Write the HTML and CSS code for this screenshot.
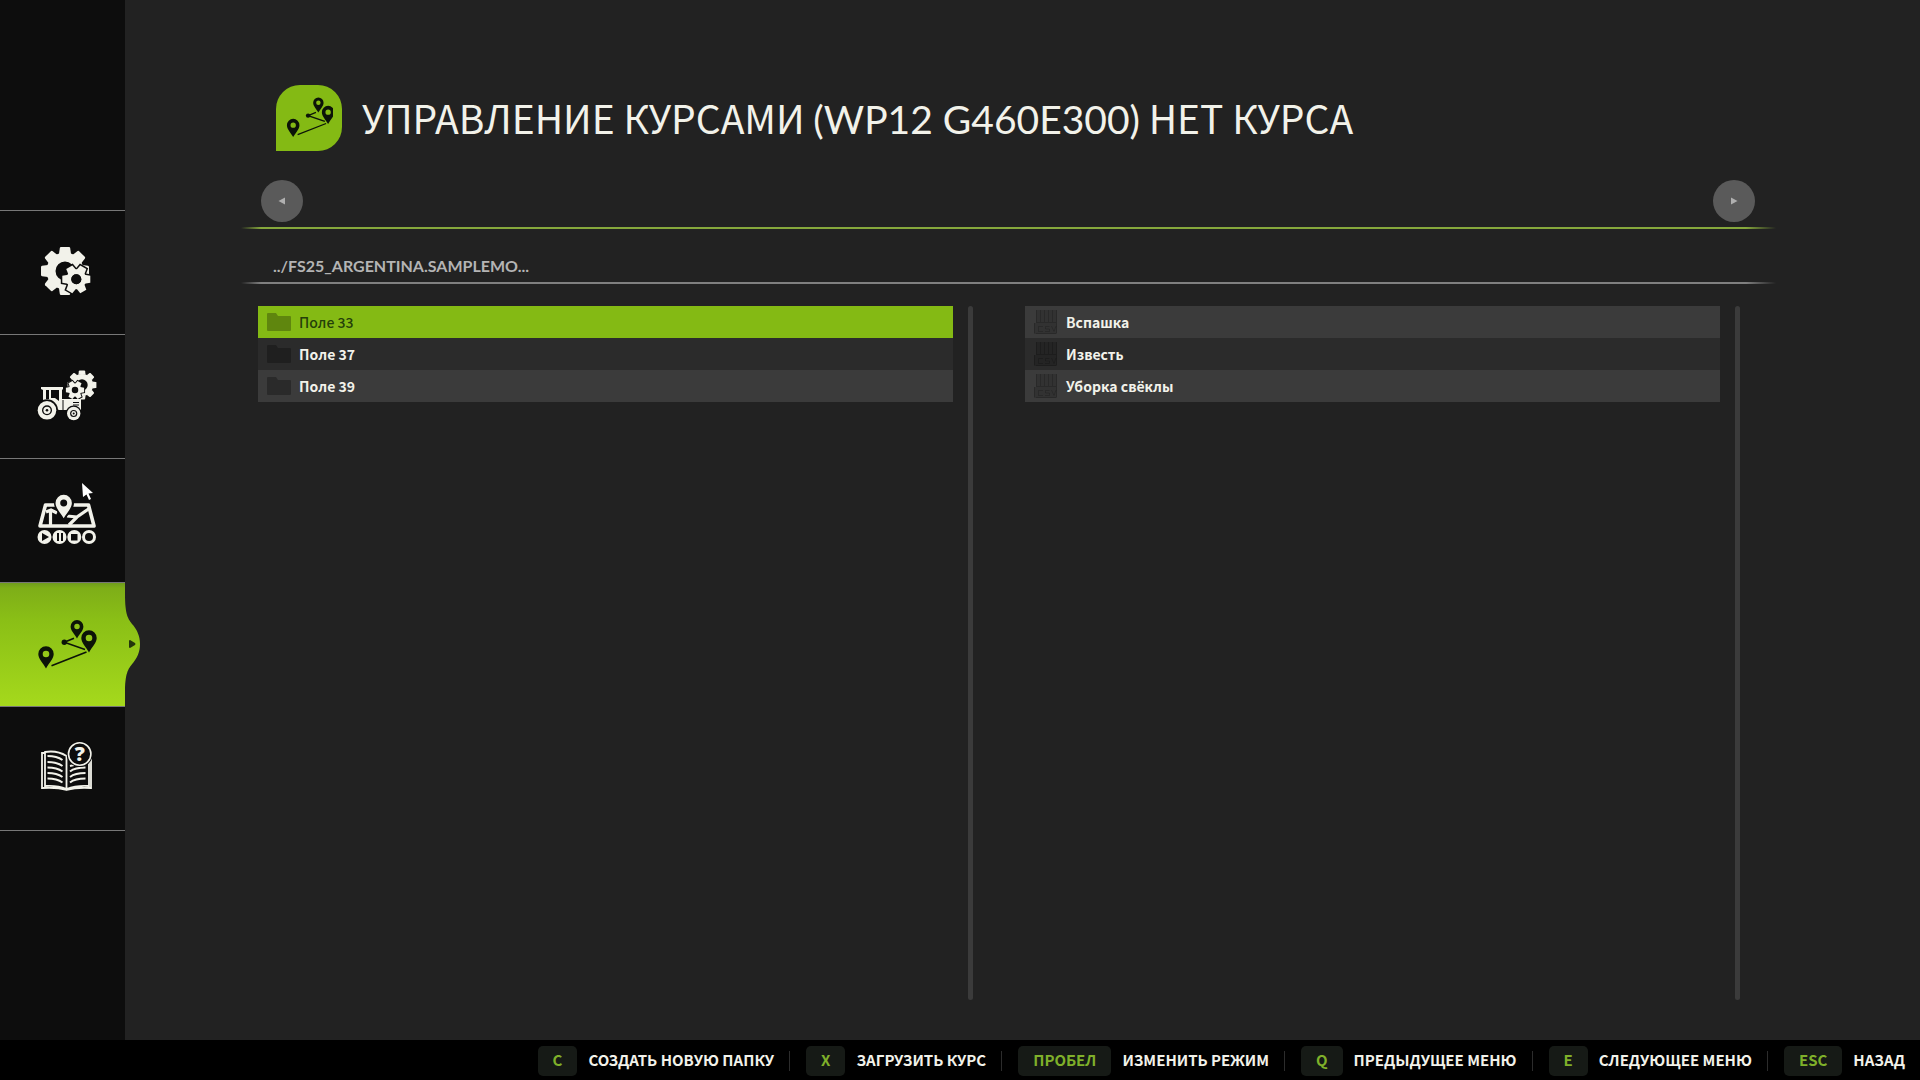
FILE: index.html
```html
<!DOCTYPE html>
<html lang="ru">
<head>
<meta charset="utf-8">
<meta name="viewport" content="width=device-width, initial-scale=1">
<title>Управление курсами</title>
<link rel="stylesheet" href="styles.css">
</head>
<body>
<svg class="defs" aria-hidden="true">
  <defs>
    <path id="tooth" d="M-6 -17 L-5.200 -23 Q-5 -24 -4 -24 H4 Q5 -24 5.200 -23 L6 -17Z"/>
    <g id="gear8">
      <circle r="14" fill="none" stroke="currentColor" stroke-width="9"/>
      <use href="#tooth"/><use href="#tooth" transform="rotate(45)"/><use href="#tooth" transform="rotate(90)"/><use href="#tooth" transform="rotate(135)"/><use href="#tooth" transform="rotate(180)"/><use href="#tooth" transform="rotate(225)"/><use href="#tooth" transform="rotate(270)"/><use href="#tooth" transform="rotate(315)"/>
    </g>
    <path id="cog" d="M-4.500 -8 L-3.500 -14 H3.500 L4.500 -8Z"/>
    <g id="gear6">
      <circle r="7.500" fill="none" stroke="currentColor" stroke-width="5"/>
      <g transform="rotate(30)"><use href="#cog"/><use href="#cog" transform="rotate(60)"/><use href="#cog" transform="rotate(120)"/><use href="#cog" transform="rotate(180)"/><use href="#cog" transform="rotate(240)"/><use href="#cog" transform="rotate(300)"/></g>
    </g>
    <path id="pin" fill-rule="evenodd" d="M0 14.500 C-3 9 -7.700 5 -7.700 0 A7.700 7.700 0 0 1 7.700 0 C7.700 5 3 9 0 14.500Z M0 -3.300 A3.300 3.300 0 1 0 0 3.300 A3.300 3.300 0 1 0 0 -3.300Z"/>
    <symbol id="route" viewBox="0 0 64 64" overflow="visible">
      <use href="#pin" x="15" y="42"/>
      <use href="#pin" transform="translate(46 14.500) scale(.83)"/>
      <use href="#pin" x="58" y="26"/>
      <circle cx="33.300" cy="30.300" r="2.700"/>
      <path d="M43 26.300 L33.300 30.300 L54 37.500 M55.500 40 L20.500 53.700" fill="none" stroke="currentColor" stroke-width="1.600"/>
    </symbol>
    <symbol id="folder" viewBox="0 0 24 18"><path d="M0 1 Q0 0 1 0 H9 L11 3 H23 Q24 3 24 4 V17 Q24 18 23 18 H1 Q0 18 0 17Z"/></symbol>
    <symbol id="file" viewBox="0 0 24 24">
      <path d="M2 0 H23 V23 H22 V24 H2 V23 H0 V13 H2Z" opacity=".5"/>
      <path d="M2.500 0V12 M6.500 0V12 M10.500 0V12 M14.500 0V12 M18.500 0V12 M22.500 0V12 M2 12.500H23 M0.500 13V23.500H22.500V13 M9 16.500H4.500V21.500H9 M15.500 16.500H11.500V19H15.500V21.500H11 M17.500 16L20 21.500L22 16" fill="none" stroke="currentColor" opacity=".6"/>
    </symbol>
  </defs>
</svg>
<div class="screen">
  <div class="workspace">
    <nav class="sidebar" aria-label="Разделы">
      <button class="tab" type="button" aria-label="Настройки">
        <svg class="tab-icon" viewBox="0 0 64 64">
          <use href="#gear8" x="34" y="31"/>
          <g transform="translate(45.300 39.300)">
            <circle r="11" class="cut"/>
            <use href="#gear6" class="cut-outline"/>
            <use href="#gear6"/>
            <circle r="5" class="cut"/>
          </g>
        </svg>
      </button>
      <button class="tab" type="button" aria-label="Настройки техники">
        <svg class="tab-icon" viewBox="0 0 64 64">
          <use href="#gear8" transform="translate(51 21) scale(.6)"/>
          <g transform="translate(44 26) scale(.65)">
            <circle r="11" class="cut"/>
            <use href="#gear6" class="cut-outline"/>
            <use href="#gear6"/>
          </g>
          <path fill-rule="evenodd" d="M10 23H32V25L31 26V35H50V46H28L24 44L12 37L12 26L10 25Z M15 26V35L18 35V26Z M20 26V34H24L28 37V26Z"/>
          <path d="M32 36V46 M42 38.500H48 M42 41H48" class="ink"/>
          <circle cx="16" cy="46.300" r="11" class="cut"/>
          <circle cx="16" cy="46.300" r="9.300"/>
          <circle cx="16" cy="46.300" r="5" class="cut"/>
          <circle cx="16" cy="46.300" r="3.600"/>
          <circle cx="16" cy="46.300" r="1.300" class="cut"/>
          <circle cx="42.700" cy="49.500" r="8" class="cut"/>
          <circle cx="42.700" cy="49.500" r="6.700"/>
          <circle cx="42.700" cy="49.500" r="3.600" class="cut"/>
          <circle cx="42.700" cy="49.500" r="2.400"/>
          <circle cx="42.700" cy="49.500" r="1" class="cut"/>
        </svg>
      </button>
      <button class="tab" type="button" aria-label="Карта">
        <svg class="tab-icon" viewBox="0 0 64 64">
          <path d="M14.500 17H57.500L63 38H9Z" fill="none" stroke="currentColor" stroke-width="3.600" stroke-linejoin="round"/>
          <path d="M15 24L20 22L26 25 M19.500 24V38 M59 20L46 29L38 37 M36 28L46 29" fill="none" stroke="currentColor" stroke-width="3.200"/>
          <path d="M33 32 C28 26 23 21 23 15 H43 C43 21 38 26 33 32Z" class="cut"/>
          <use href="#pin" transform="translate(32.700 15) scale(1.060)"/>
          <g>
            <circle cx="13.500" cy="49" r="7"/><circle cx="28.500" cy="49" r="7"/><circle cx="43.300" cy="49" r="7"/><circle cx="58" cy="49" r="7"/>
          </g>
          <path d="M11 45L18 49L11 53Z M26 45H28V53H26Z M30 45H32V53H30Z M40 46H46.500V52.500H40Z" class="cut"/>
          <circle cx="58" cy="49" r="4" class="cut"/>
        </svg>
      </button>
      <button class="tab tab-active" type="button" aria-label="Курсы" aria-current="page">
        <svg class="tab-icon" viewBox="0 0 64 64"><use href="#route"/></svg>
        <svg class="tab-bulge" viewBox="0 0 16 124" aria-hidden="true">
          <defs><linearGradient id="lime" gradientUnits="userSpaceOnUse" x1="0" y1="0" x2="0" y2="124"><stop offset="0" stop-color="#7eae18"/><stop offset=".3" stop-color="#8abf16"/><stop offset="1" stop-color="#a5d91c"/></linearGradient></defs>
          <path d="M0 12 C0 33 3 37 8 43 C12 48 15 54 15 62 C15 70 12 76 8 81 C3 87 0 91 0 112Z" fill="url(#lime)"/>
          <path d="M4 59 Q4 58 5 58 L10 61 Q11 62 10 63 L5 66 Q4 66 4 65Z" fill="#24350c"/>
        </svg>
      </button>
      <button class="tab tab-last" type="button" aria-label="Справка">
        <svg class="tab-icon" viewBox="0 0 64 64">
          <path d="M14 16 Q26 14 35.500 20 Q46 14 58 16 V50 Q46 49 35.500 53 Q26 49 14 50Z M14 17H11V52Q26 51 35.500 54Q46 51 60 52V17H58 M35.500 20V53" fill="none" stroke="currentColor" stroke-width="1.800"/>
          <path d="M16.500 20Q26 20 31.500 24 M16.500 26Q26 26 31.500 30 M16.500 31.500Q26 31.500 31.500 35.500 M16.500 37Q26 37 31.500 41 M16.500 42.500Q26 42.500 31.500 46.500 M54.500 31.500Q44 31.500 39 35.500 M54.500 37Q44 37 39 41 M54.500 42.500Q44 42.500 39 46.500 M39 30L43 29" fill="none" stroke="currentColor" stroke-width="2"/>
          <circle cx="48.700" cy="18" r="13" class="cut"/>
          <circle cx="48.700" cy="18" r="11.200" class="cut" stroke="currentColor" stroke-width="1.600"/>
          <text x="48.700" y="25" text-anchor="middle" class="help-mark">?</text>
        </svg>
      </button>
    </nav>
    <main class="content">
      <header class="heading">
        <span class="badge"><svg class="badge-icon" viewBox="0 0 64 64" aria-hidden="true"><use href="#route"/></svg></span>
        <h1 class="title">УПРАВЛЕНИЕ КУРСАМИ <span class="latin">(WP12 G460E300)</span> НЕТ КУРСА</h1>
      </header>
      <div class="pager">
        <button class="round" type="button" aria-label="Назад"><svg viewBox="0 0 8 8" class="arrow"><path d="M7 0.500V7.500L0.500 4Z"/></svg></button>
        <button class="round" type="button" aria-label="Вперёд"><svg viewBox="0 0 8 8" class="arrow"><path d="M1 0.500V7.500L7.500 4Z"/></svg></button>
      </div>
      <div class="rule rule-lime"></div>
      <p class="path">../FS25_ARGENTINA.SAMPLEMO...</p>
      <div class="rule"></div>
      <div class="panels">
        <section class="panel" aria-label="Папки">
          <ul class="list">
            <li><button class="row row-selected" type="button"><svg class="folder"><use href="#folder"/></svg>Поле 33</button></li>
            <li><button class="row" type="button"><svg class="folder"><use href="#folder"/></svg>Поле 37</button></li>
            <li><button class="row" type="button"><svg class="folder"><use href="#folder"/></svg>Поле 39</button></li>
          </ul>
          <div class="scroll"></div>
        </section>
        <section class="panel" aria-label="Курсы">
          <ul class="list">
            <li><button class="row" type="button"><svg class="file"><use href="#file"/></svg>Вспашка</button></li>
            <li><button class="row" type="button"><svg class="file"><use href="#file"/></svg>Известь</button></li>
            <li><button class="row" type="button"><svg class="file"><use href="#file"/></svg>Уборка свёклы</button></li>
          </ul>
          <div class="scroll"></div>
        </section>
      </div>
    </main>
  </div>
  <footer class="keys">
    <button class="action" type="button"><kbd class="key">C</kbd>СОЗДАТЬ НОВУЮ ПАПКУ</button>
    <button class="action" type="button"><kbd class="key">X</kbd>ЗАГРУЗИТЬ КУРС</button>
    <button class="action" type="button"><kbd class="key">ПРОБЕЛ</kbd>ИЗМЕНИТЬ РЕЖИМ</button>
    <button class="action" type="button"><kbd class="key">Q</kbd>ПРЕДЫДУЩЕЕ МЕНЮ</button>
    <button class="action" type="button"><kbd class="key">E</kbd>СЛЕДУЮЩЕЕ МЕНЮ</button>
    <button class="action" type="button"><kbd class="key">ESC</kbd>НАЗАД</button>
  </footer>
  <svg class="cursor" viewBox="0 0 11 17" aria-hidden="true"><path d="M0 0L11 10L6.500 10.500L9 16L7 17L4.500 11.500L1 14Z" fill="#fff"/></svg>
</div>
</body>
</html>
```
FILE: styles.css
```css
* {
  box-sizing: border-box;
}

body {
  margin: 0;
  background: #222;
  color: #f2f2ea;
  font: 700 15px/24px "Noto Sans CJK SC", "Noto Sans", sans-serif;
}

button {
  margin: 0;
  padding: 0;
  border: 0;
  background: none;
  color: inherit;
  font: inherit;
  text-align: left;
}

svg {
  display: block;
  fill: currentColor;
}

.defs {
  position: absolute;
  width: 0;
  height: 0;
}

.screen {
  position: relative;
  display: flex;
  flex-direction: column;
  min-height: 100vh;
}

.workspace {
  display: flex;
  flex: 1;
}

/* Sidebar */
.sidebar {
  display: flex;
  flex-direction: column;
  flex: none;
  width: 125px;
  padding-top: 210px;
  background: #0d0d0d;
}

.tab {
  position: relative;
  height: 124px;
  padding: 29px 30px 30px 31px;
  border-top: 1px solid #777;
}

.tab-last {
  height: 125px;
  border-bottom: 1px solid #777;
}

.tab-active {
  background: linear-gradient(#6f9c1c, #7eae18 5px, #8abf16 30%, #a5d91c);
  color: #0c1408;
}

.tab-icon {
  width: 64px;
  height: 64px;
  overflow: visible;
}

.tab-bulge {
  position: absolute;
  top: -1px;
  left: 100%;
  width: 16px;
  height: 124px;
}

.cut {
  fill: #0d0d0d;
}

.cut-outline {
  color: #0d0d0d;
  stroke: #0d0d0d;
  stroke-width: 3px;
}

.ink {
  fill: none;
  stroke: #0d0d0d;
}

.help-mark {
  font: 900 20px "Noto Sans", sans-serif;
}

/* Page content */
.content {
  display: flex;
  flex: 1;
  flex-direction: column;
  padding: 85px 144px 40px 116px;
}

.heading {
  display: flex;
  gap: 20px;
  padding-left: 35px;
}

.badge {
  flex: none;
  width: 66px;
  height: 66px;
  padding: 6px 5px;
  border-radius: 24px 24px 24px 0;
  background: #84ba14;
  color: #0c1408;
}

.badge-icon {
  width: 52px;
  height: 52px;
}

.title {
  margin: 0;
  font-size: 39px;
  font-weight: 400;
  line-height: 64px;
}

.latin {
  font-family: Lato, sans-serif;
}

.pager {
  display: flex;
  justify-content: space-between;
  padding: 29px 21px 5px 20px;
}

.round {
  display: grid;
  place-items: center;
  width: 42px;
  height: 42px;
  border-radius: 50%;
  background: #5a5a5a;
  color: #b0b0b0;
}

.arrow {
  width: 8px;
  height: 8px;
}

.rule {
  height: 2px;
  background: linear-gradient(90deg, transparent, #808080 20px, #808080 calc(100% - 30px), transparent);
}

.rule-lime {
  background: linear-gradient(90deg, transparent, #86a83c 20px, #86a83c calc(100% - 30px), transparent);
}

.path {
  margin: 0;
  padding: 25px 32px 4px;
  color: #b4b4b4;
  font-size: 16px;
  font-family: Lato, sans-serif;
}

.panels {
  display: grid;
  flex: 1;
  grid-template-columns: 1fr 1fr;
  gap: 52px;
  padding: 22px 36px 0 17px;
}

.panel {
  display: flex;
  gap: 15px;
}

.list {
  flex: 1;
  margin: 0;
  padding: 0;
  list-style: none;
}

.row {
  display: flex;
  align-items: center;
  gap: 8px;
  width: 100%;
  height: 32px;
  padding-left: 9px;
  background: #3b3b3b;
  font-size: 14px;
}

li:nth-child(2) .row {
  background: #2b2b2b;
}

li .row-selected {
  background: #84ba14;
  color: #24400a;
  font-weight: 500;
}

.folder {
  width: 24px;
  height: 18px;
  color: rgb(0 0 0 / 28%);
}

.file {
  width: 24px;
  height: 24px;
  color: rgb(0 0 0 / 28%);
}

.scroll {
  width: 5px;
  border-radius: 3px;
  background: #3b3b3b;
}

/* Key hints */
.keys {
  display: flex;
  justify-content: flex-end;
  height: 40px;
  padding: 6px 15px 4px;
  background: #000;
}

.action {
  display: flex;
  align-items: baseline;
  white-space: nowrap;
}

.action + .action::before {
  content: "";
  align-self: center;
  width: 1px;
  height: 20px;
  margin: 0 16px 0 15px;
  background: #2c2c2c;
}

.key {
  margin-right: 11px;
  padding: 2px 15px 4px;
  border-radius: 5px;
  background: #161a16;
  color: #7fb02a;
  font: inherit;
}

.cursor {
  position: absolute;
  top: 483px;
  left: 82px;
  width: 11px;
  height: 17px;
}
```
